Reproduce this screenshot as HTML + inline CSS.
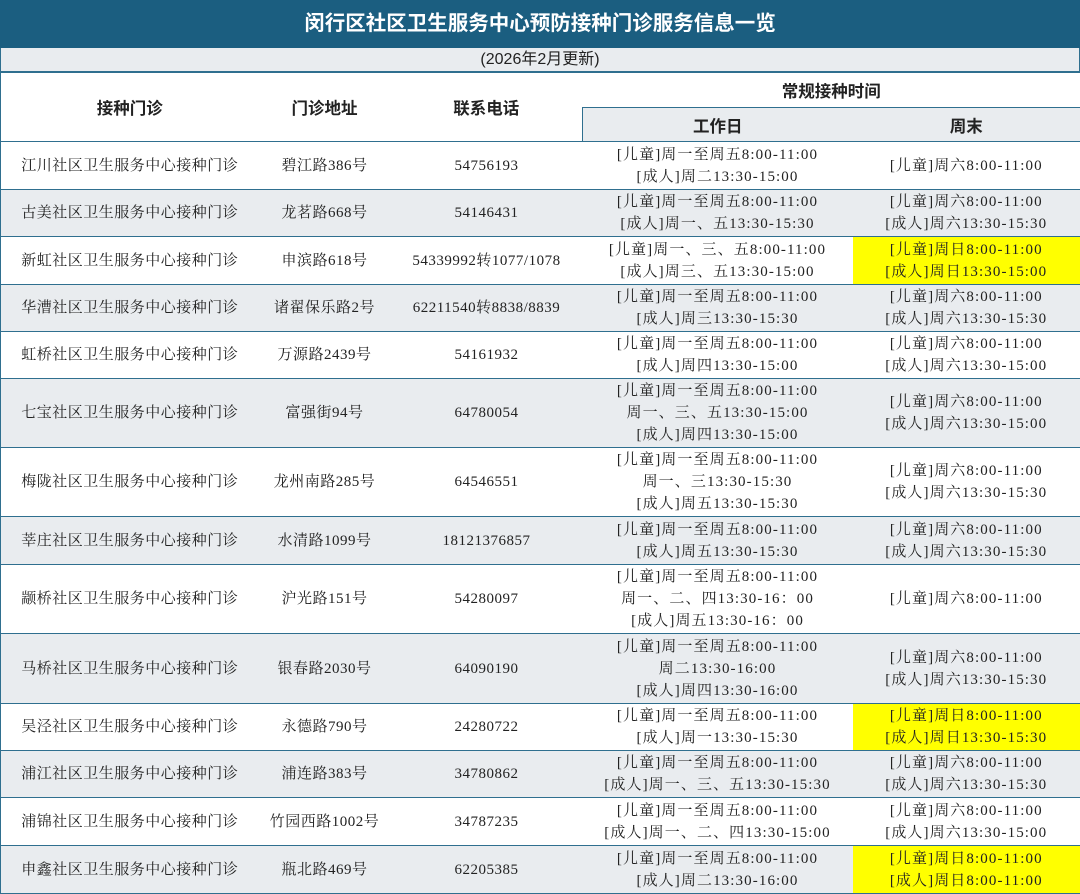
<!DOCTYPE html>
<html><head><meta charset="utf-8">
<style>
body{margin:0;width:1080px;height:893px;overflow:hidden;background:#fff;font-family:"Liberation Serif","Noto Serif CJK SC",serif;color:#222}
.title{position:absolute;left:0;top:0;width:1080px;height:48px;background:#1b5e80;color:#fff;font:bold 20.5px "Liberation Sans","Noto Sans CJK SC",sans-serif;text-align:center;line-height:48px}
.sub{position:absolute;left:0;top:48px;width:1078px;height:23px;background:#e9ecef;border:1px solid #2f6f8f;border-top:none;font:16px "Liberation Sans","Noto Sans CJK SC",sans-serif;text-align:center;line-height:23px}
table{position:absolute;left:0;top:72px;width:1080px;border-collapse:collapse;table-layout:fixed}
td{border-top:1px solid #2f6f8f;border-bottom:1px solid #2f6f8f;text-align:center;vertical-align:middle;font-size:15px;letter-spacing:0.5px;line-height:22px;padding:0;white-space:nowrap;overflow:hidden}
td:nth-child(4),td:nth-child(5){letter-spacing:1.1px}
td:first-child{border-left:1px solid #2f6f8f}
td:last-child{border-right:1px solid #2f6f8f}
td.h{font:bold 16.5px "Liberation Sans","Noto Sans CJK SC",sans-serif;letter-spacing:0}
.g td{background:#e9ecef}
.hg{background:#e9ecef}
td.y{background:#ffff00 !important}
</style></head><body>
<div class="title">闵行区社区卫生服务中心预防接种门诊服务信息一览</div>
<div class="sub">(2026年2月更新)</div>
<table>
<colgroup><col style="width:258px"><col style="width:132px"><col style="width:192px"><col style="width:270px"><col style="width:228px"></colgroup>
<tr style="height:35px"><td class="h" rowspan="2">接种门诊</td><td class="h" rowspan="2">门诊地址</td><td class="h" rowspan="2">联系电话</td><td class="h" colspan="2">常规接种时间</td></tr>
<tr style="height:34px"><td class="h hg">工作日</td><td class="h hg">周末</td></tr>
<tr style="height:48px"><td>江川社区卫生服务中心接种门诊</td><td>碧江路386号</td><td>54756193</td><td>[儿童]周一至周五8:00-11:00<br>[成人]周二13:30-15:00</td><td>[儿童]周六8:00-11:00</td></tr>
<tr class="g" style="height:47px"><td>古美社区卫生服务中心接种门诊</td><td>龙茗路668号</td><td>54146431</td><td>[儿童]周一至周五8:00-11:00<br>[成人]周一、五13:30-15:30</td><td>[儿童]周六8:00-11:00<br>[成人]周六13:30-15:30</td></tr>
<tr style="height:48px"><td>新虹社区卫生服务中心接种门诊</td><td>申滨路618号</td><td>54339992转1077/1078</td><td>[儿童]周一、三、五8:00-11:00<br>[成人]周三、五13:30-15:00</td><td class="y">[儿童]周日8:00-11:00<br>[成人]周日13:30-15:00</td></tr>
<tr class="g" style="height:47px"><td>华漕社区卫生服务中心接种门诊</td><td>诸翟保乐路2号</td><td>62211540转8838/8839</td><td>[儿童]周一至周五8:00-11:00<br>[成人]周三13:30-15:30</td><td>[儿童]周六8:00-11:00<br>[成人]周六13:30-15:30</td></tr>
<tr style="height:47px"><td>虹桥社区卫生服务中心接种门诊</td><td>万源路2439号</td><td>54161932</td><td>[儿童]周一至周五8:00-11:00<br>[成人]周四13:30-15:00</td><td>[儿童]周六8:00-11:00<br>[成人]周六13:30-15:00</td></tr>
<tr class="g" style="height:69px"><td>七宝社区卫生服务中心接种门诊</td><td>富强街94号</td><td>64780054</td><td>[儿童]周一至周五8:00-11:00<br>周一、三、五13:30-15:00<br>[成人]周四13:30-15:00</td><td>[儿童]周六8:00-11:00<br>[成人]周六13:30-15:00</td></tr>
<tr style="height:69px"><td>梅陇社区卫生服务中心接种门诊</td><td>龙州南路285号</td><td>64546551</td><td>[儿童]周一至周五8:00-11:00<br>周一、三13:30-15:30<br>[成人]周五13:30-15:30</td><td>[儿童]周六8:00-11:00<br>[成人]周六13:30-15:30</td></tr>
<tr class="g" style="height:48px"><td>莘庄社区卫生服务中心接种门诊</td><td>水清路1099号</td><td>18121376857</td><td>[儿童]周一至周五8:00-11:00<br>[成人]周五13:30-15:30</td><td>[儿童]周六8:00-11:00<br>[成人]周六13:30-15:30</td></tr>
<tr style="height:69px"><td>颛桥社区卫生服务中心接种门诊</td><td>沪光路151号</td><td>54280097</td><td>[儿童]周一至周五8:00-11:00<br>周一、二、四13:30-16：00<br>[成人]周五13:30-16：00</td><td>[儿童]周六8:00-11:00</td></tr>
<tr class="g" style="height:70px"><td>马桥社区卫生服务中心接种门诊</td><td>银春路2030号</td><td>64090190</td><td>[儿童]周一至周五8:00-11:00<br>周二13:30-16:00<br>[成人]周四13:30-16:00</td><td>[儿童]周六8:00-11:00<br>[成人]周六13:30-15:30</td></tr>
<tr style="height:47px"><td>吴泾社区卫生服务中心接种门诊</td><td>永德路790号</td><td>24280722</td><td>[儿童]周一至周五8:00-11:00<br>[成人]周一13:30-15:30</td><td class="y">[儿童]周日8:00-11:00<br>[成人]周日13:30-15:30</td></tr>
<tr class="g" style="height:47px"><td>浦江社区卫生服务中心接种门诊</td><td>浦连路383号</td><td>34780862</td><td>[儿童]周一至周五8:00-11:00<br>[成人]周一、三、五13:30-15:30</td><td>[儿童]周六8:00-11:00<br>[成人]周六13:30-15:30</td></tr>
<tr style="height:48px"><td>浦锦社区卫生服务中心接种门诊</td><td>竹园西路1002号</td><td>34787235</td><td>[儿童]周一至周五8:00-11:00<br>[成人]周一、二、四13:30-15:00</td><td>[儿童]周六8:00-11:00<br>[成人]周六13:30-15:00</td></tr>
<tr class="g" style="height:48px"><td>申鑫社区卫生服务中心接种门诊</td><td>瓶北路469号</td><td>62205385</td><td>[儿童]周一至周五8:00-11:00<br>[成人]周二13:30-16:00</td><td class="y">[儿童]周日8:00-11:00<br>[成人]周日8:00-11:00</td></tr>
</table>
</body></html>
